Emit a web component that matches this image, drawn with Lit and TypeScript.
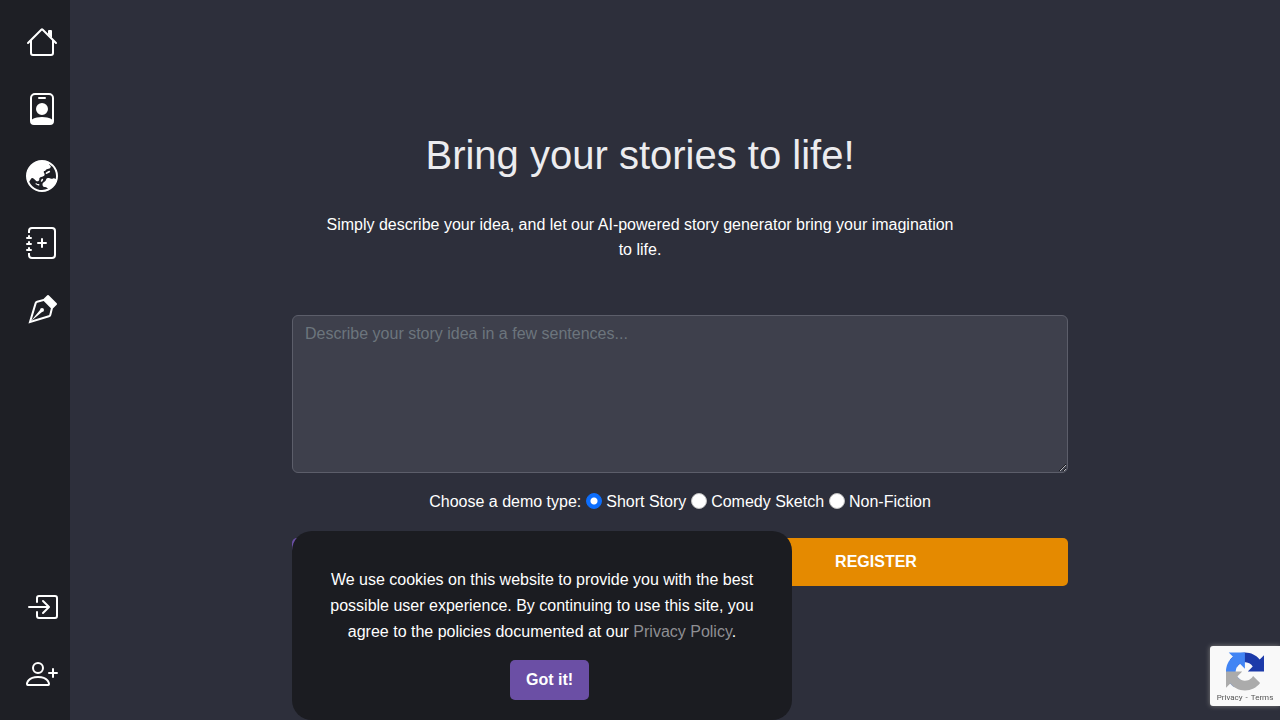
import { LitElement, html, css, svg } from "lit";
import { customElement, state } from "lit/decorators.js";

interface NavItem {
  label: string;
  href: string;
  paths: string[];
}

const mainNav: NavItem[] = [
  {
    label: "Home",
    href: "#home",
    paths: [
      "M2 13.5V7h1v6.5a.5.5 0 0 0 .5.5h9a.5.5 0 0 0 .5-.5V7h1v6.5a1.5 1.5 0 0 1-1.5 1.5h-9A1.5 1.5 0 0 1 2 13.5zm11-11V6l-2-2V2.5a.5.5 0 0 1 .5-.5h1a.5.5 0 0 1 .5.5z",
      "M7.293 1.5a1 1 0 0 1 1.414 0l6.647 6.646a.5.5 0 0 1-.708.708L8 2.207 1.354 8.854a.5.5 0 1 1-.708-.708L7.293 1.5z",
    ],
  },
  {
    label: "Characters",
    href: "#characters",
    paths: [
      "M6.5 2a.5.5 0 0 0 0 1h3a.5.5 0 0 0 0-1h-3zM11 8a3 3 0 1 1-6 0 3 3 0 0 1 6 0z",
      "M4.5 0A2.5 2.5 0 0 0 2 2.5V14a2 2 0 0 0 2 2h8a2 2 0 0 0 2-2V2.5A2.5 2.5 0 0 0 11.5 0h-7zM3 2.5A1.5 1.5 0 0 1 4.5 1h7A1.5 1.5 0 0 1 13 2.5v10.795a4.2 4.2 0 0 0-.776-.492C11.392 12.387 10.063 12 8 12s-3.392.387-4.224.803a4.2 4.2 0 0 0-.776.492V2.5z",
    ],
  },
  {
    label: "Worlds",
    href: "#worlds",
    paths: [
      "m10.495 6.92 1.278-.619a.483.483 0 0 0 .126-.782c-.252-.244-.682-.139-.932.107-.23.226-.513.373-.816.53l-.102.054c-.338.178-.264.626.1.736a.476.476 0 0 0 .346-.027ZM7.741 9.808V9.78a.413.413 0 1 1 .783.183l-.22.443a.602.602 0 0 1-.12.167l-.193.185a.36.36 0 1 1-.5-.516l.112-.108a.453.453 0 0 0 .138-.326ZM5.672 12.5l.482.233A.386.386 0 1 0 6.32 12h-.416a.702.702 0 0 1-.419-.139l-.277-.206a.302.302 0 1 0-.298.52l.761.325Z",
      "M8 0a8 8 0 1 0 0 16A8 8 0 0 0 8 0ZM1.612 10.867l.756-1.288a1 1 0 0 1 1.545-.225l1.074 1.005a.986.986 0 0 0 1.36-.011l.038-.037a.882.882 0 0 0 .26-.755c-.075-.548.37-1.033.92-1.099.728-.086 1.587-.324 1.728-.957.086-.386-.114-.83-.361-1.2-.207-.312 0-.8.374-.8.123 0 .24-.055.318-.15l.393-.474c.196-.237.491-.368.797-.403.554-.064 1.407-.277 1.583-.973.098-.391-.192-.634-.484-.88-.254-.212-.51-.426-.515-.741a6.998 6.998 0 0 1 3.425 7.692 1.015 1.015 0 0 0-.087-.063l-.316-.204a1 1 0 0 0-.977-.06l-.169.082a1 1 0 0 1-.741.051l-1.021-.329A1 1 0 0 0 11.205 9h-.165a1 1 0 0 0-.945.674l-.172.499a1 1 0 0 1-.404.514l-.802.518a1 1 0 0 0-.458.84v.455a1 1 0 0 0 1 1h.257a1 1 0 0 1 .542.16l.762.49a.998.998 0 0 0 .283.126 7.001 7.001 0 0 1-9.49-3.409Z",
    ],
  },
  {
    label: "New story",
    href: "#new",
    paths: [
      "M8 5.5a.5.5 0 0 1 .5.5v1.5H10a.5.5 0 0 1 0 1H8.5V10a.5.5 0 0 1-1 0V8.5H6a.5.5 0 0 1 0-1h1.5V6a.5.5 0 0 1 .5-.5z",
      "M3 0h10a2 2 0 0 1 2 2v12a2 2 0 0 1-2 2H3a2 2 0 0 1-2-2v-1h1v1a1 1 0 0 0 1 1h10a1 1 0 0 0 1-1V2a1 1 0 0 0-1-1H3a1 1 0 0 0-1 1v1H1V2a2 2 0 0 1 2-2z",
      "M1 5v-.5a.5.5 0 0 1 1 0V5h.5a.5.5 0 0 1 0 1h-2a.5.5 0 0 1 0-1H1zm0 3v-.5a.5.5 0 0 1 1 0V8h.5a.5.5 0 0 1 0 1h-2a.5.5 0 0 1 0-1H1zm0 3v-.5a.5.5 0 0 1 1 0v.5h.5a.5.5 0 0 1 0 1h-2a.5.5 0 0 1 0-1H1z",
    ],
  },
  {
    label: "Editor",
    href: "#editor",
    paths: [
      "M10.646.646a.5.5 0 0 1 .708 0l4 4a.5.5 0 0 1 0 .708l-1.902 1.902-.829 3.313a1.5 1.5 0 0 1-1.024 1.073L1.254 14.746 4.358 4.4A1.5 1.5 0 0 1 5.43 3.377l3.313-.828L10.646.646zm-1.8 2.908-3.173.793a.5.5 0 0 0-.358.342l-2.57 8.565 8.567-2.57a.5.5 0 0 0 .34-.357l.794-3.174-3.6-3.6z",
      "M2.832 13.228 8 9a1 1 0 1 0-1-1l-4.228 5.168-.026.086.086-.026z",
    ],
  },
];

const accountNav: NavItem[] = [
  {
    label: "Log in",
    href: "#login",
    paths: [
      "M6 3.5a.5.5 0 0 1 .5-.5h8a.5.5 0 0 1 .5.5v9a.5.5 0 0 1-.5.5h-8a.5.5 0 0 1-.5-.5v-2a.5.5 0 0 0-1 0v2A1.5 1.5 0 0 0 6.5 14h8a1.5 1.5 0 0 0 1.5-1.5v-9A1.5 1.5 0 0 0 14.5 2h-8A1.5 1.5 0 0 0 5 3.5v2a.5.5 0 0 0 1 0v-2z",
      "M11.854 8.354a.5.5 0 0 0 0-.708l-3-3a.5.5 0 1 0-.708.708L10.293 7.5H1.5a.5.5 0 0 0 0 1h8.793l-2.147 2.146a.5.5 0 0 0 .708.708l3-3z",
    ],
  },
  {
    label: "Register",
    href: "#register",
    paths: [
      "M6 8a3 3 0 1 0 0-6 3 3 0 0 0 0 6zm2-3a2 2 0 1 1-4 0 2 2 0 0 1 4 0zm4 8c0 1-1 1-1 1H1s-1 0-1-1 1-4 6-4 6 3 6 4zm-1-.004c-.001-.246-.154-.986-.832-1.664C9.516 10.68 8.289 10 6 10c-2.29 0-3.516.68-4.168 1.332-.678.678-.83 1.418-.832 1.664h10z",
      "M13.5 5a.5.5 0 0 1 .5.5V7h1.5a.5.5 0 0 1 0 1H14v1.5a.5.5 0 0 1-1 0V8h-1.5a.5.5 0 0 1 0-1H13V5.5a.5.5 0 0 1 .5-.5z",
    ],
  },
];

const demoTypes = ["Short Story", "Comedy Sketch", "Non-Fiction"];

@customElement("side-nav")
class SideNav extends LitElement {
  static styles = css`
    :host {
      display: flex;
      flex: none;
      width: 70px;
      background: #1e1f25;
    }
    .nav {
      display: flex;
      flex: 1;
      flex-direction: column;
      justify-content: space-between;
      padding: 26px 12px 30px 26px;
    }
    .group {
      display: flex;
      flex-direction: column;
      gap: 35px;
      margin: 0;
      padding: 0;
      list-style: none;
    }
    .link {
      display: block;
      color: #fff;
    }
    .icon {
      display: block;
      width: 32px;
      height: 32px;
      fill: currentColor;
    }
  `;

  private group(items: NavItem[]) {
    return html`<ul class="group">
      ${items.map(
        (item) => html`<li>
          <a class="link" href=${item.href} aria-label=${item.label}>
            <svg class="icon" viewBox="0 0 16 16" aria-hidden="true">
              ${item.paths.map((d) => svg`<path d=${d}></path>`)}
            </svg>
          </a>
        </li>`
      )}
    </ul>`;
  }

  render() {
    return html`<nav class="nav">${this.group(mainNav)}${this.group(accountNav)}</nav>`;
  }
}

@customElement("cookie-notice")
class CookieNotice extends LitElement {
  static styles = css`
    :host {
      display: block;
      box-sizing: border-box;
      padding: 36px 32px 20px;
      border-radius: 20px;
      background: #1b1c21;
      color: #fff;
      text-align: center;
    }
    .text {
      margin: 0 0 15px;
      line-height: 26px;
    }
    .policy {
      color: #8f8f93;
      text-decoration: none;
    }
    .accept {
      height: 40px;
      margin-left: 15px;
      padding: 0 16px;
      border: 0;
      border-radius: 5px;
      background: #6b4fa5;
      color: #fff;
      font: inherit;
      font-weight: 700;
      cursor: pointer;
    }
  `;

  render() {
    return html`
      <p class="text">
        We use cookies on this website to provide you with the best possible user experience. By
        continuing to use this site, you agree to the policies documented at our
        <a class="policy" href="#privacy">Privacy Policy</a>.
      </p>
      <button class="accept" type="button" @click=${() => this.dispatchEvent(new Event("accept"))}>Got it!</button>
    `;
  }
}

@customElement("captcha-badge")
class CaptchaBadge extends LitElement {
  static styles = css`
    :host {
      display: flex;
      flex-direction: column;
      align-items: center;
      box-sizing: border-box;
      width: 70px;
      height: 60px;
      padding-top: 6px;
      border-radius: 3px 0 0 3px;
      background: #f9f9f9;
      box-shadow: 0 0 5px #808080;
      font: 8px/14px Roboto, sans-serif;
      color: #555;
    }
    .logo {
      display: block;
      width: 38px;
      height: 39px;
    }
    .link {
      color: inherit;
      text-decoration: none;
    }
    .links {
      display: flex;
      gap: 3px;
      white-space: nowrap;
    }
  `;

  render() {
    return html`
      <svg class="logo" viewBox="0 0 64 64" aria-hidden="true">
        <path fill="#1C3AA9" d="M64 31.955l-.033-1.37V4.687l-7.16 7.16C50.948 4.674 42.033.093 32.05.093c-10.4 0-19.622 4.96-25.458 12.64l11.736 11.86a15.55 15.55 0 0 1 4.754-5.334c2.05-1.6 4.952-2.906 8.968-2.906.485 0 .86.057 1.135.163 4.976.393 9.288 3.14 11.828 7.124l-8.307 8.307L64 31.953"></path>
        <path fill="#4285F4" d="M31.862.094l-1.37.033H4.594l7.16 7.16C4.58 13.147 0 22.06 0 32.046c0 10.4 4.96 19.622 12.64 25.458L24.5 45.768a15.55 15.55 0 0 1-5.334-4.754c-1.6-2.05-2.906-4.952-2.906-8.968 0-.485.057-.86.163-1.135.393-4.976 3.14-9.288 7.124-11.828l8.307 8.307L31.86.095"></path>
        <path fill="#ABABAB" d="M.001 32.045l.033 1.37v25.898l7.16-7.16c5.86 7.173 14.774 11.754 24.76 11.754 10.4 0 19.622-4.96 25.458-12.64l-11.736-11.86a15.55 15.55 0 0 1-4.754 5.334c-2.05 1.6-4.952 2.906-8.968 2.906-.485 0-.86-.057-1.135-.163-4.976-.393-9.288-3.14-11.828-7.124l8.307-8.307c-10.522.04-22.4.066-27.295-.005"></path>
      </svg>
      <div class="links">
        <a class="link" href="#captcha-privacy">Privacy</a><span>-</span><a class="link" href="#captcha-terms">Terms</a>
      </div>
    `;
  }
}

@customElement("app-root")
class AppRoot extends LitElement {
  static styles = css`
    :host {
      display: flex;
      min-height: 100vh;
      background: #2d2f3b;
      color: #fff;
      font: 16px/24px "Liberation Sans", Arial, sans-serif;
    }
    .main {
      flex: 1;
      padding: 131px 0 134px 10px;
    }
    .hero {
      max-width: 640px;
      margin: 0 auto;
      padding-right: 80px;
      text-align: center;
    }
    .title {
      margin: 0 0 33px;
      font-size: 40px;
      font-weight: 400;
      line-height: 48px;
      color: #ececef;
    }
    .lead {
      margin: 0 0 53px;
      line-height: 25px;
    }
    .form {
      max-width: 776px;
      margin: 0 auto;
    }
    .idea {
      display: block;
      box-sizing: border-box;
      width: 100%;
      padding: 6px 12px;
      border: 1px solid #5c5e6a;
      border-radius: 6px;
      background: #3e404c;
      color: #fff;
      font: inherit;
      resize: vertical;
    }
    .idea::placeholder {
      color: #6c757d;
      opacity: 1;
    }
    .types {
      margin: 17px 0 24px;
      text-align: center;
    }
    .radio {
      appearance: none;
      box-sizing: border-box;
      width: 16px;
      height: 16px;
      margin: 0;
      border: 1px solid #bfbfbf;
      border-radius: 50%;
      background: #fff;
      vertical-align: -2px;
    }
    .radio:checked {
      border-color: #0d6efd;
      background: radial-gradient(circle, #fff 3px, #0d6efd 4px);
    }
    .actions {
      display: grid;
      grid-template-columns: 1fr 1fr;
      gap: 8px;
    }
    .action {
      height: 48px;
      border: 0;
      border-radius: 5px;
      background: #6b4fa5;
      color: #fff;
      font: inherit;
      font-weight: 700;
      cursor: pointer;
    }
    .register {
      background: #e58a00;
    }
    .cookies {
      position: fixed;
      bottom: 0;
      left: 292px;
      width: 500px;
    }
    .captcha {
      position: fixed;
      right: 0;
      bottom: 14px;
    }
  `;

  @state() private showCookies = true;

  render() {
    return html`
      <side-nav></side-nav>
      <main class="main">
        <header class="hero">
          <h1 class="title">Bring your stories to life!</h1>
          <p class="lead">
            Simply describe your idea, and let our AI-powered story generator bring your imagination to life.
          </p>
        </header>
        <form class="form" @submit=${(e: Event) => e.preventDefault()}>
          <textarea class="idea" rows="6" aria-label="Story idea" placeholder="Describe your story idea in a few sentences..."></textarea>
          <div class="types" role="radiogroup" aria-labelledby="types-label">
            <span id="types-label">Choose a demo type:</span>
            ${demoTypes.map(
              (type, i) => html`<input class="radio" type="radio" name="type" id="type-${i}" .checked=${i === 0} />
                <label for="type-${i}">${type}</label> `
            )}
          </div>
          <div class="actions">
            <button class="action" type="submit">CREATE</button>
            <button class="action register" type="button">REGISTER</button>
          </div>
        </form>
      </main>
      ${this.showCookies
        ? html`<cookie-notice class="cookies" @accept=${() => (this.showCookies = false)}></cookie-notice>`
        : null}
      <captcha-badge class="captcha"></captcha-badge>
    `;
  }
}
